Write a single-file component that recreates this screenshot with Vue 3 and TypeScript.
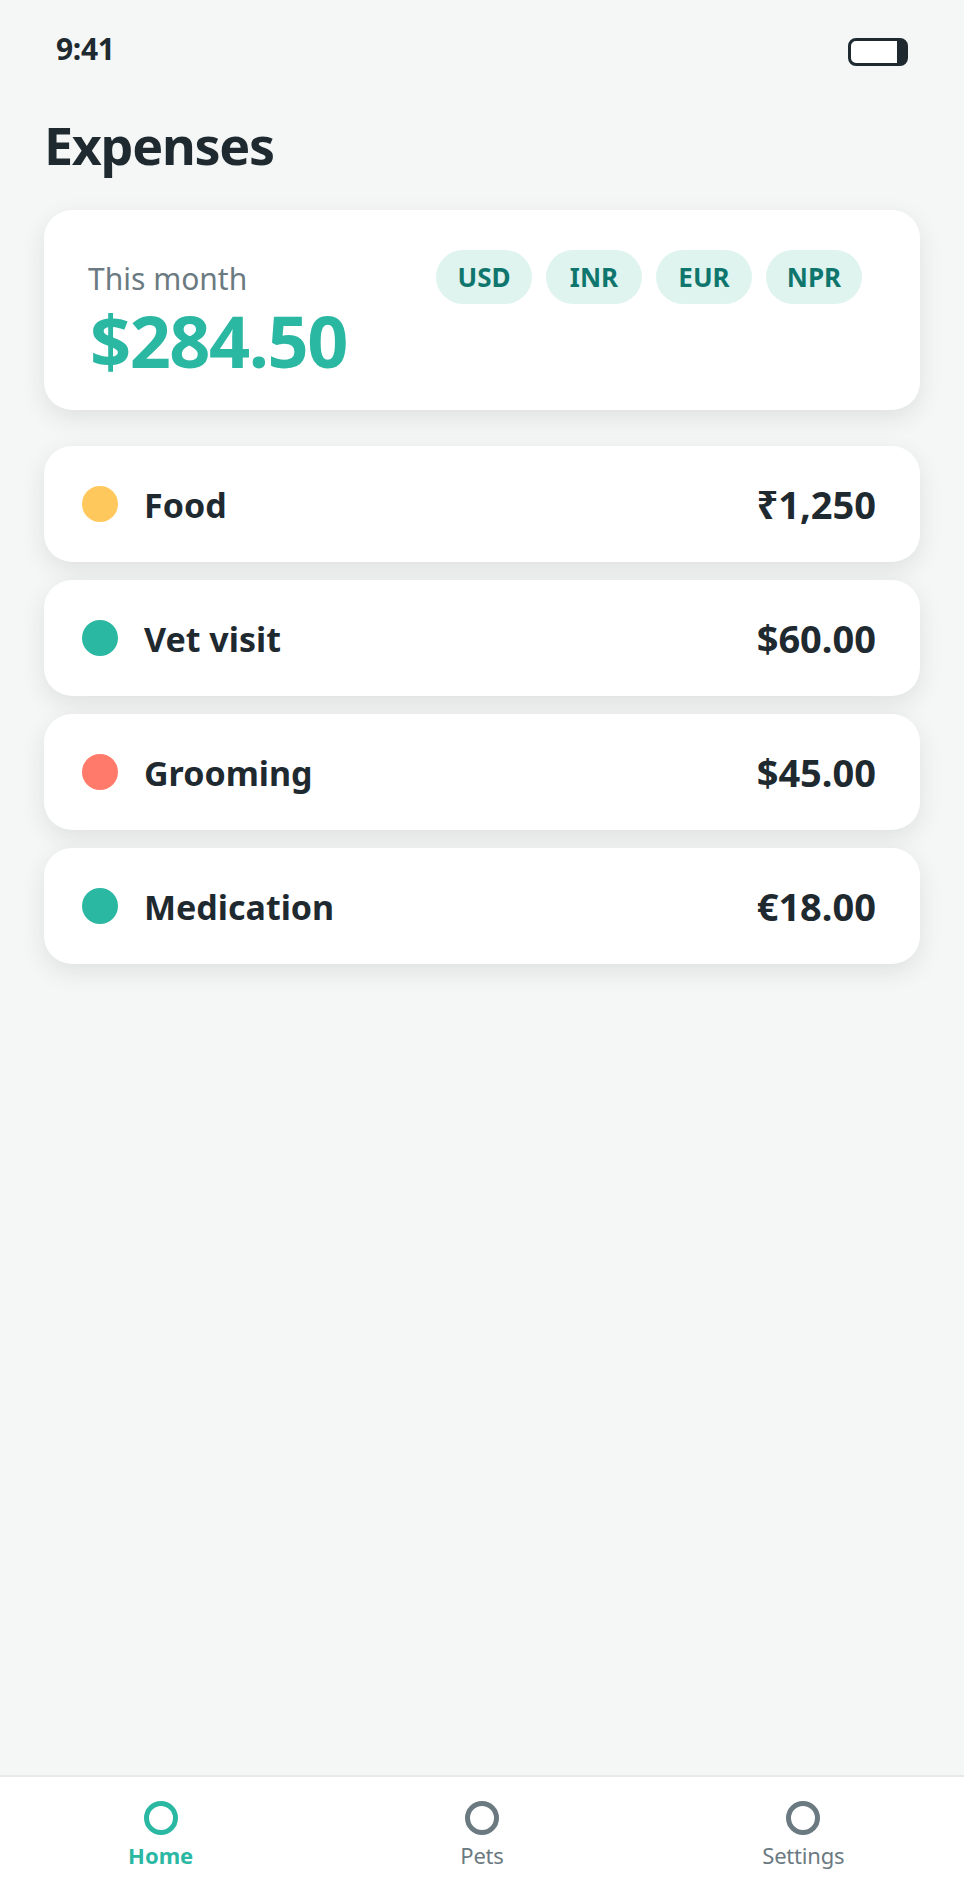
<script setup lang="ts">
type Expense = { name: string; amount: string; color: string }

const currencies = ['USD', 'INR', 'EUR', 'NPR']
const expenses: Expense[] = [
  { name: 'Food', amount: '₹1,250', color: '#ffc85c' },
  { name: 'Vet visit', amount: '$60.00', color: '#2bb8a3' },
  { name: 'Grooming', amount: '$45.00', color: '#ff7a6b' },
  { name: 'Medication', amount: '€18.00', color: '#2bb8a3' }
]
const tabs = ['Home', 'Pets', 'Settings']
</script>

<template>
  <div class="screen">
    <div class="status">
      <span class="time">9:41</span>
      <span class="battery"></span>
    </div>
    <h1 class="title">Expenses</h1>
    <section class="summary">
      <div class="totals">
        <div class="label">This month</div>
        <div class="total">$284.50</div>
      </div>
      <div class="chips">
        <span v-for="c in currencies" :key="c" class="chip">{{ c }}</span>
      </div>
    </section>
    <div class="list">
      <div v-for="e in expenses" :key="e.name" class="row">
        <span class="dot" :style="{ background: e.color }"></span>
        <span class="name">{{ e.name }}</span>
        <span class="amount">{{ e.amount }}</span>
      </div>
    </div>
    <nav class="nav">
      <div v-for="(t, i) in tabs" :key="t" class="tab" :class="{ active: i === 0 }">
        <span class="ring"></span>
        <span class="tab-label">{{ t }}</span>
      </div>
    </nav>
  </div>
</template>

<style scoped>
.screen {
  width: 964px;
  height: 1900px;
  display: flex;
  flex-direction: column;
  background: #f5f7f6;
  color: #1f2a30;
  font-family: "Noto Sans", sans-serif;
}

.status {
  display: flex;
  justify-content: space-between;
  align-items: center;
  height: 28px;
  margin-top: 38px;
  padding: 0 56px;
}

.time {
  font-size: 30px;
  font-weight: 700;
  line-height: 28px;
  margin-bottom: 6px;
  letter-spacing: -0.3px;
}

.battery {
  width: 60px;
  height: 28px;
  box-sizing: border-box;
  border: 3px solid #1f2a30;
  border-right-width: 11px;
  border-radius: 8px;
  background: #fff;
}

.title {
  margin: 43px 0 0 44px;
  font-size: 52px;
  line-height: 72px;
  font-weight: 700;
  letter-spacing: -1.3px;
}

.summary {
  display: flex;
  justify-content: space-between;
  height: 200px;
  box-sizing: border-box;
  margin: 29px 44px 0;
  padding: 40px 58px 0 44px;
  background: #fff;
  border-radius: 28px;
  box-shadow: 0 8px 24px rgba(31, 42, 48, 0.1);
}

.label {
  font-size: 30px;
  line-height: 40px;
  color: #6b7a81;
  margin-top: 9px;
}

.total {
  margin: 3px 0 0 2px;
  font-size: 72px;
  line-height: 76px;
  font-weight: 700;
  letter-spacing: -1.5px;
  color: #2bb8a3;
}

.chips {
  display: flex;
  gap: 14px;
}

.chip {
  width: 96px;
  height: 54px;
  display: flex;
  align-items: center;
  justify-content: center;
  border-radius: 27px;
  background: #dff4ee;
  color: #0f766e;
  font-size: 26px;
  font-weight: 700;
}

.list {
  display: flex;
  flex-direction: column;
  gap: 18px;
  margin: 36px 44px 0;
}

.row {
  display: flex;
  align-items: center;
  height: 116px;
  padding: 0 44px 0 38px;
  background: #fff;
  border-radius: 28px;
  box-shadow: 0 8px 24px rgba(31, 42, 48, 0.1);
}

.dot {
  width: 36px;
  height: 36px;
  border-radius: 50%;
  margin-right: 26px;
}

.name {
  flex: 1;
  padding-top: 2px;
  font-size: 34px;
  font-weight: 700;
}

.amount {
  font-size: 38px;
  font-weight: 700;
}

.nav {
  margin-top: auto;
  height: 125px;
  box-sizing: border-box;
  display: grid;
  grid-template-columns: repeat(3, 1fr);
  background: #fff;
  border-top: 2px solid #e6ebea;
}

.tab {
  display: flex;
  flex-direction: column;
  align-items: center;
  padding-top: 24px;
  color: #6b7a81;
}

.ring {
  width: 34px;
  height: 34px;
  box-sizing: border-box;
  border: 5px solid currentColor;
  border-radius: 50%;
}

.tab-label {
  margin-top: 5px;
  font-size: 22px;
  line-height: 30px;
  letter-spacing: -0.2px;
}

.active {
  color: #2bb8a3;
}

.active .tab-label {
  font-weight: 700;
  letter-spacing: 0;
}
</style>
